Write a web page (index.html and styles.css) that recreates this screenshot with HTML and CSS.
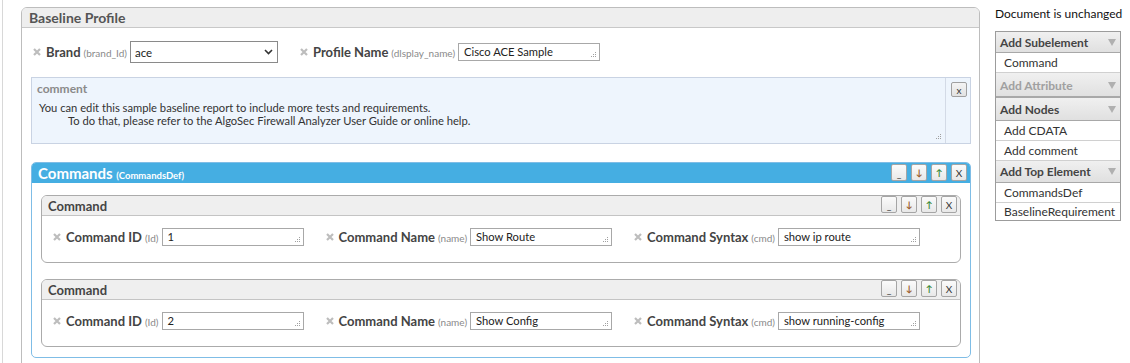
FILE: index.html
```html
<!DOCTYPE html>
<html>
<head>
<meta charset="utf-8">
<title>Baseline Profile</title>
<link rel="stylesheet" href="styles.css">
</head>
<body>
<div class="page">
  <div class="main">
    <section class="panel">
      <div class="panel-head">Baseline Profile</div>
      <div class="panel-body">
        <div class="attr-row">
          <div class="field">
            <svg class="rm" width="8" height="8" viewBox="0 0 8 8"><path d="M1 1L7 7M7 1L1 7" stroke="#bdbdbd" stroke-width="2.2"/></svg>
            <span class="lbl">Brand</span><span class="key">(brand_Id)</span>
            <div class="select-wrap">
              <select class="sel"><option>ace</option></select>
              <svg class="chev" width="9" height="6" viewBox="0 0 9 6"><path d="M1 1L4.5 4.5L8 1" fill="none" stroke="#333" stroke-width="1.6"/></svg>
            </div>
          </div>
          <div class="field">
            <svg class="rm" width="8" height="8" viewBox="0 0 8 8"><path d="M1 1L7 7M7 1L1 7" stroke="#bdbdbd" stroke-width="2.2"/></svg>
            <span class="lbl">Profile Name</span><span class="key">(dlsplay_name)</span>
            <div class="tbox">
              <textarea class="ta" rows="1">Cisco ACE Sample</textarea>
              <svg class="grip" width="6" height="6" viewBox="0 0 6 6"><path d="M5 0h1v1H5zM3 2h1v1H3zM5 2h1v1H5zM1 4h1v1H1zM3 4h1v1H3zM5 4h1v1H5z" fill="#a0a0a0"/></svg>
            </div>
          </div>
        </div>

        <div class="comment">
          <div class="comment-main">
            <div class="comment-title">comment</div>
            <div class="comment-text">
              <div>You can edit this sample baseline report to include more tests and requirements.</div>
              <div class="indent">To do that, please refer to the AlgoSec Firewall Analyzer User Guide or online help.</div>
            </div>
            <svg class="grip cgrip" width="6" height="6" viewBox="0 0 6 6"><path d="M5 0h1v1H5zM3 2h1v1H3zM5 2h1v1H5zM1 4h1v1H1zM3 4h1v1H3zM5 4h1v1H5z" fill="#a0a0a0"/></svg>
          </div>
          <div class="comment-side"><span class="xbtn">x</span></div>
        </div>

        <div class="cmds">
          <div class="cmds-head">
            <span class="cmds-title">Commands <small>(CommandsDef)</small></span>
            <div class="btns">
              <span class="btn">_</span><span class="btn dn">&#8595;</span><span class="btn up">&#8593;</span><span class="btn">X</span>
            </div>
          </div>
          <div class="cmds-body">
            <div class="cmd">
              <div class="cmd-head">
                <span class="cmd-title">Command</span>
                <div class="btns">
                  <span class="btn">_</span><span class="btn dn">&#8595;</span><span class="btn up">&#8593;</span><span class="btn">X</span>
                </div>
              </div>
              <div class="cmd-body">
                <div class="field">
                  <svg class="rm" width="8" height="8" viewBox="0 0 8 8"><path d="M1 1L7 7M7 1L1 7" stroke="#bdbdbd" stroke-width="2.2"/></svg>
                  <span class="lbl">Command ID</span><span class="key">(Id)</span>
                  <div class="tbox"><textarea class="ta" rows="1">1</textarea><svg class="grip" width="6" height="6" viewBox="0 0 6 6"><path d="M5 0h1v1H5zM3 2h1v1H3zM5 2h1v1H5zM1 4h1v1H1zM3 4h1v1H3zM5 4h1v1H5z" fill="#a0a0a0"/></svg></div>
                </div>
                <div class="field">
                  <svg class="rm" width="8" height="8" viewBox="0 0 8 8"><path d="M1 1L7 7M7 1L1 7" stroke="#bdbdbd" stroke-width="2.2"/></svg>
                  <span class="lbl">Command Name</span><span class="key">(name)</span>
                  <div class="tbox"><textarea class="ta" rows="1">Show Route</textarea><svg class="grip" width="6" height="6" viewBox="0 0 6 6"><path d="M5 0h1v1H5zM3 2h1v1H3zM5 2h1v1H5zM1 4h1v1H1zM3 4h1v1H3zM5 4h1v1H5z" fill="#a0a0a0"/></svg></div>
                </div>
                <div class="field">
                  <svg class="rm" width="8" height="8" viewBox="0 0 8 8"><path d="M1 1L7 7M7 1L1 7" stroke="#bdbdbd" stroke-width="2.2"/></svg>
                  <span class="lbl">Command Syntax</span><span class="key">(cmd)</span>
                  <div class="tbox"><textarea class="ta" rows="1">show ip route</textarea><svg class="grip" width="6" height="6" viewBox="0 0 6 6"><path d="M5 0h1v1H5zM3 2h1v1H3zM5 2h1v1H5zM1 4h1v1H1zM3 4h1v1H3zM5 4h1v1H5z" fill="#a0a0a0"/></svg></div>
                </div>
              </div>
            </div>

            <div class="cmd">
              <div class="cmd-head">
                <span class="cmd-title">Command</span>
                <div class="btns">
                  <span class="btn">_</span><span class="btn dn">&#8595;</span><span class="btn up">&#8593;</span><span class="btn">X</span>
                </div>
              </div>
              <div class="cmd-body">
                <div class="field">
                  <svg class="rm" width="8" height="8" viewBox="0 0 8 8"><path d="M1 1L7 7M7 1L1 7" stroke="#bdbdbd" stroke-width="2.2"/></svg>
                  <span class="lbl">Command ID</span><span class="key">(Id)</span>
                  <div class="tbox"><textarea class="ta" rows="1">2</textarea><svg class="grip" width="6" height="6" viewBox="0 0 6 6"><path d="M5 0h1v1H5zM3 2h1v1H3zM5 2h1v1H5zM1 4h1v1H1zM3 4h1v1H3zM5 4h1v1H5z" fill="#a0a0a0"/></svg></div>
                </div>
                <div class="field">
                  <svg class="rm" width="8" height="8" viewBox="0 0 8 8"><path d="M1 1L7 7M7 1L1 7" stroke="#bdbdbd" stroke-width="2.2"/></svg>
                  <span class="lbl">Command Name</span><span class="key">(name)</span>
                  <div class="tbox"><textarea class="ta" rows="1">Show Config</textarea><svg class="grip" width="6" height="6" viewBox="0 0 6 6"><path d="M5 0h1v1H5zM3 2h1v1H3zM5 2h1v1H5zM1 4h1v1H1zM3 4h1v1H3zM5 4h1v1H5z" fill="#a0a0a0"/></svg></div>
                </div>
                <div class="field">
                  <svg class="rm" width="8" height="8" viewBox="0 0 8 8"><path d="M1 1L7 7M7 1L1 7" stroke="#bdbdbd" stroke-width="2.2"/></svg>
                  <span class="lbl">Command Syntax</span><span class="key">(cmd)</span>
                  <div class="tbox"><textarea class="ta" rows="1">show running-config</textarea><svg class="grip" width="6" height="6" viewBox="0 0 6 6"><path d="M5 0h1v1H5zM3 2h1v1H3zM5 2h1v1H5zM1 4h1v1H1zM3 4h1v1H3zM5 4h1v1H5z" fill="#a0a0a0"/></svg></div>
                </div>
              </div>
            </div>
          </div>
        </div>
      </div>
    </section>
  </div>

  <aside class="side">
    <div class="doc-status">Document is unchanged</div>
    <div class="menu">
      <div class="mh first">Add Subelement<svg class="tri" width="8" height="7" viewBox="0 0 8 7"><path d="M0 0H8L4 7Z" fill="#b0b0b0"/></svg></div>
      <div class="mi">Command</div>
      <div class="mh disabled">Add Attribute<svg class="tri" width="8" height="7" viewBox="0 0 8 7"><path d="M0 0H8L4 7Z" fill="#b0b0b0"/></svg></div>
      <div class="mh">Add Nodes<svg class="tri" width="8" height="7" viewBox="0 0 8 7"><path d="M0 0H8L4 7Z" fill="#b0b0b0"/></svg></div>
      <div class="mi">Add CDATA</div>
      <div class="mi">Add comment</div>
      <div class="mh top">Add Top Element<svg class="tri" width="8" height="7" viewBox="0 0 8 7"><path d="M0 0H8L4 7Z" fill="#b0b0b0"/></svg></div>
      <div class="mi">CommandsDef</div>
      <div class="mi last">BaselineRequirement</div>
    </div>
  </aside>
</div>
</body>
</html>
```
FILE: styles.css
```css
* { box-sizing: border-box; }
html, body { margin: 0; height: 100%; overflow: hidden; background: #fff; }
body { font-family: Lato, "Liberation Sans", sans-serif; color: #333; }

.page { display: flex; height: 363px; }

.main {
  flex: none;
  width: 978px;
  margin-left: 2px;
  border-left: 1px solid #d8d8d8;
  padding: 7px 0 0 18px;
}

.panel {
  width: 959px;
  height: 420px;
  border: 1px solid #bdbdbd;
  border-radius: 6px 6px 0 0;
}
.panel-head {
  height: 20px;
  background: #eeeeee;
  border-bottom: 1px solid #c8c8c8;
  border-radius: 5px 5px 0 0;
  padding-left: 7px;
  font-weight: bold;
  font-size: 14px;
  line-height: 19px;
  color: #555;
}
.panel-body { padding: 13px 8px 0 9px; }

.attr-row { display: flex; align-items: center; height: 22px; padding-left: 2px; gap: 22px; }
.field { display: flex; align-items: center; }
.rm { flex: none; margin-right: 5px; }
.lbl { font-weight: bold; font-size: 13px; color: #444; white-space: nowrap; }
.key { font-size: 10px; color: #8a8a8a; margin: 1px 3px 0 3px; white-space: nowrap; }

.select-wrap { display: grid; width: 148px; height: 22px; }
.sel {
  grid-area: 1 / 1;
  appearance: none;
  -webkit-appearance: none;
  width: 148px; height: 22px;
  border: 1px solid #8a8a8a;
  border-radius: 0;
  background: #fff;
  padding: 0 4px;
  font-family: Lato, "Liberation Sans", sans-serif;
  font-size: 11.5px;
  color: #222;
}
.chev { grid-area: 1 / 1; align-self: center; justify-self: end; margin-right: 5px; }

.tbox {
  display: grid;
  width: 142px;
  height: 18px;
  border: 1px solid #a8a8a8;
  background: #fff;
}
.ta {
  grid-area: 1 / 1;
  width: 100%;
  height: 16px;
  border: 0;
  padding: 0 5px;
  margin: 0;
  resize: none;
  overflow: hidden;
  background: transparent;
  font-family: Lato, "Liberation Sans", sans-serif;
  font-size: 11.2px;
  line-height: 16px;
  color: #222;
  white-space: nowrap;
}
.grip { grid-area: 1 / 1; align-self: end; justify-self: end; margin: 0 3px 2px 0; }

.comment {
  display: flex;
  margin-top: 14px;
  height: 67px;
  border: 1px solid #c9d3e3;
  background: #eef5fd;
}
.comment-main { flex: 1; display: flex; flex-direction: column; padding-top: 4px; }
.comment-title { font-weight: bold; font-size: 12px; line-height: 14px; color: #8a8a8a; padding-left: 5px; }
.comment-text { margin-top: 5px; padding-left: 7px; font-size: 11.2px; line-height: 13px; color: #333; }
.indent { padding-left: 29px; }
.cgrip { align-self: flex-end; margin: auto 4px 3px 0; }
.comment-side { flex: none; width: 25px; border-left: 1px solid #d3dae6; padding: 4px 0 0 5px; }
.xbtn {
  display: flex; align-items: center; justify-content: center;
  width: 16px; height: 15px;
  border: 1px solid #a0a0a0; border-radius: 2px;
  background: linear-gradient(#f4f4f4, #e2e2e2);
  font-size: 10px; color: #333; line-height: 1;
}

.cmds {
  margin-top: 18px;
  border: 1px solid #7fbde6;
  border-radius: 5px;
  padding-bottom: 10px;
}
.cmds-head {
  display: flex;
  height: 20px;
  background: #45aee2;
  border-radius: 4px 4px 0 0;
  padding-left: 6px;
}
.cmds-title { color: #fff; font-weight: bold; font-size: 15px; line-height: 21px; }
.cmds-title small { font-size: 9.5px; }
.btns { margin-left: auto; display: flex; gap: 4px; margin-right: 3px; padding-top: 1px; }
.btn {
  display: flex; align-items: center; justify-content: center;
  width: 16px; height: 17px;
  border: 1px solid #a5a5a5; border-radius: 2px;
  background: linear-gradient(#fbfbfb, #e8e8e8);
  font-size: 10px; color: #333; line-height: 1;
}
.btn.dn { color: #9a5a2a; font-weight: bold; font-size: 9px; }
.btn.up { color: #3b8a3b; font-weight: bold; font-size: 9px; }

.cmds-body { display: flex; flex-direction: column; gap: 16px; padding: 12px 9px 0 9px; }
.cmd { border: 1px solid #ababab; border-radius: 6px; }
.cmd-head {
  display: flex;
  height: 20px;
  background: #efefef;
  border-bottom: 1px solid #c4c4c4;
  border-radius: 5px 5px 0 0;
  padding-left: 6px;
}
.cmd-head .btns { padding-top: 0; }
.cmd-title { font-weight: bold; font-size: 13px; line-height: 20px; color: #444; }
.cmd-body { display: flex; align-items: center; gap: 22px; padding: 12px 0 16px 11px; }

.side { flex: none; width: 126px; margin-left: 15px; }
.doc-status { font-size: 12px; line-height: 15px; padding-top: 6px; color: #111; white-space: nowrap; }
.menu { margin-top: 10px; border: 1px solid #9c9c9c; }
.mh {
  display: flex; align-items: center; justify-content: space-between;
  height: 24px;
  padding: 1px 4px 0;
  background: linear-gradient(#f0f0f0, #e0e0e0);
  border-top: 1px solid #a8a8a8;
  border-bottom: 1px solid #a8a8a8;
  font-weight: bold; font-size: 12px; color: #444;
}
.mh.first { height: 21px; border-top: 0; padding-top: 0; }
.mh.top { height: 22px; padding-top: 0; }
.mh.disabled { color: #a0a0a0; }
.mi {
  height: 20px;
  padding-left: 8px;
  font-size: 12px; line-height: 19px; color: #333;
  border-bottom: 1px solid #d0d0d0;
  background: #fff;
  white-space: nowrap;
}
.mi + .mh { border-top: 0; }
.mi.last { border-bottom: 0; height: 17px; line-height: 17px; }
```
